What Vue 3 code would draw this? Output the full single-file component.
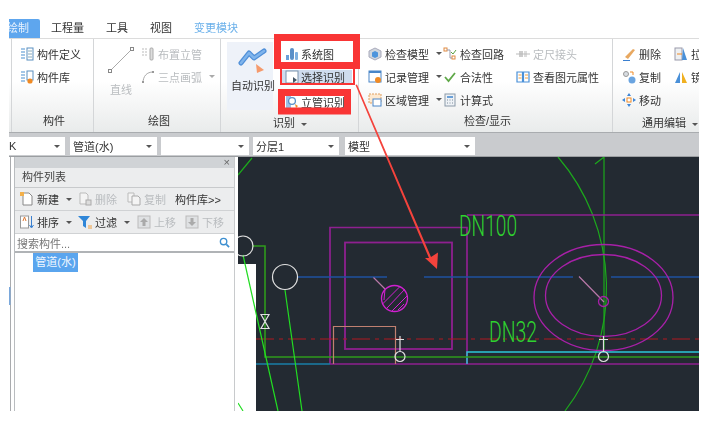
<template>
  <div class="page">
    <div class="app">
      <!-- tab strip -->
      <nav class="tabs">
        <span class="tab active">绘制</span>
        <span class="tab t1">工程量</span>
        <span class="tab t2">工具</span>
        <span class="tab t3">视图</span>
        <span class="tab t4">变更模块</span>
      </nav>

      <!-- ribbon -->
      <section class="ribbon">
        <div class="group g1">
          <div class="body">
            <div class="col">
              <div class="row">
                <svg class="ic" viewBox="0 0 14 14"><path d="M1 2h4M1 5h4M1 8h4M1 11h4" stroke="#4a90d0" stroke-width="1.2" fill="none"/><rect x="7" y="1" width="6" height="12" fill="#fff" stroke="#5a8fc0"/><path d="M8 4h4M8 7h4M8 10h4" stroke="#8ab" /></svg>
                <span>构件定义</span>
              </div>
              <div class="row">
                <svg class="ic" viewBox="0 0 14 14"><path d="M1 2h4M1 5h4M1 8h4M1 11h4" stroke="#4a90d0" stroke-width="1.2" fill="none"/><rect x="7" y="1" width="6" height="9" fill="#fff" stroke="#5a8fc0"/><circle cx="10" cy="11" r="2.6" fill="#f08a24"/></svg>
                <span>构件库</span>
              </div>
            </div>
          </div>
          <div class="label">构件</div>
        </div>

        <div class="group g2">
          <div class="body">
            <div class="big line-btn">
              <svg class="big-ic" viewBox="0 0 26 26"><path d="M2 24L24 2" stroke="#aaa" fill="none"/><rect x="0.5" y="22.5" width="3" height="3" fill="#fff" stroke="#888"/><rect x="22.5" y="0.5" width="3" height="3" fill="#fff" stroke="#888"/></svg>
              <span class="dim">直线</span>
            </div>
            <div class="col">
              <div class="row dim">
                <svg class="ic" viewBox="0 0 14 14"><path d="M1 2h6M1 5h6M1 8h6" stroke="#bbb" stroke-dasharray="2 1"/><rect x="9" y="1" width="3" height="12" rx="1" fill="#ddd" stroke="#aaa"/></svg>
                <span>布置立管</span>
              </div>
              <div class="row dim">
                <svg class="ic" viewBox="0 0 14 14"><path d="M2 13C2 6 6 2 12 2" stroke="#aaa" fill="none"/><rect x="1" y="11" width="2" height="2" fill="#999"/><rect x="11" y="1" width="2" height="2" fill="#999"/></svg>
                <span>三点画弧</span><i class="caret light"></i>
              </div>
            </div>
          </div>
          <div class="label">绘图</div>
        </div>

        <div class="group g3">
          <div class="body">
            <div class="big auto-btn">
              <svg class="auto-ic" viewBox="0 0 30 28"><path d="M3 17L11 7L16 12L26 5" stroke="#4f8fd8" stroke-width="5" fill="none" stroke-linecap="round" stroke-linejoin="round"/><path d="M3 17L11 7L16 12L26 5" stroke="#7fb4ec" stroke-width="2.500" fill="none" stroke-linecap="round" stroke-linejoin="round"/><path d="M18 18L26 24L19 27Z" fill="#f59a6c"/></svg>
              <span>自动识别</span>
            </div>
            <div class="col small-col">
              <div class="row plain sys">
                <svg class="ic" viewBox="0 0 14 14"><rect x="1" y="8" width="3" height="5" fill="#6a9fd8"/><rect x="5" y="1" width="4" height="12" rx="2" fill="#5a8fc8"/><rect x="10" y="5" width="3" height="8" rx="1" fill="#7fb0e0"/></svg>
                <span>系统图</span>
              </div>
              <div class="row sel">
                <svg class="ic" viewBox="0 0 14 14"><rect x="1" y="1" width="12" height="12" fill="#fff" stroke="#7a93ad"/><path d="M8 7l4 3-4 3Z" fill="#456"/></svg>
                <span>选择识别</span>
              </div>
              <div class="row plain riser">
                <svg class="ic" viewBox="0 0 14 14"><path d="M1 1h5v12H1Z" fill="#9cc0e6"/><circle cx="7" cy="6" r="3.4" fill="#fff" stroke="#5a8fc8" stroke-width="1.3"/><path d="M10 9l3 2-2 2Z" fill="#f08a24"/></svg>
                <span>立管识别</span>
              </div>
            </div>
          </div>
          <div class="label with-caret">识别<i class="caret"></i></div>
        </div>

        <div class="group g4">
          <div class="body">
            <div class="col c41">
              <div class="row">
                <svg class="ic" viewBox="0 0 14 14"><path d="M7 1l6 3v6l-6 3-6-3V4Z" fill="#cfd6de" stroke="#aab"/><path d="M7 4l3 1.500v4L7 11 4 9.500v-4Z" fill="#4d94dc"/></svg>
                <span>检查模型</span><i class="caret"></i>
              </div>
              <div class="row">
                <svg class="ic" viewBox="0 0 14 14"><rect x="1" y="1" width="12" height="11" fill="#fff" stroke="#4a86c8"/><path d="M1 1h12v2H1Z" fill="#4a86c8"/><circle cx="10" cy="10" r="3" fill="#f08a24"/></svg>
                <span>记录管理</span><i class="caret"></i>
              </div>
              <div class="row">
                <svg class="ic" viewBox="0 0 14 14"><rect x="1" y="1" width="12" height="9" fill="#fde9d0" stroke="#e0a060" stroke-dasharray="2 1"/><rect x="5" y="6" width="8" height="7" fill="#fff" stroke="#4a86c8"/></svg>
                <span>区域管理</span><i class="caret"></i>
              </div>
            </div>
            <div class="col c42">
              <div class="row">
                <svg class="ic" viewBox="0 0 14 14"><rect x="1" y="1" width="3" height="3" fill="#fff" stroke="#e08a40"/><rect x="9" y="9" width="3" height="3" fill="#fff" stroke="#e08a40"/><path d="M4 3h3v8h2" stroke="#99a" fill="none"/><path d="M8 5l2 2 3-4" stroke="#5aa040" fill="none"/></svg>
                <span>检查回路</span>
              </div>
              <div class="row">
                <svg class="ic" viewBox="0 0 14 14"><path d="M2 7l3.500 4L12 3" stroke="#5fa848" stroke-width="1.800" fill="none"/></svg>
                <span>合法性</span>
              </div>
              <div class="row">
                <svg class="ic" viewBox="0 0 14 14"><rect x="2" y="1" width="10" height="12" fill="#eef2f6" stroke="#8a99a8"/><rect x="4" y="3" width="6" height="2" fill="#6aa0d8"/><path d="M4 7h1M6.500 7h1M9 7h1M4 10h1M6.500 10h1M9 10h1" stroke="#7a8a9a"/></svg>
                <span>计算式</span>
              </div>
            </div>
            <div class="col">
              <div class="row dim">
                <svg class="ic" viewBox="0 0 14 14"><rect x="3" y="4" width="4" height="6" fill="#ccc"/><rect x="8" y="4" width="3" height="6" fill="#ddd"/><path d="M0 7h14" stroke="#bbb"/></svg>
                <span>定尺接头</span>
              </div>
              <div class="row">
                <svg class="ic" viewBox="0 0 14 14"><path d="M1 2h5.500v10H1ZM7.500 2H13v10H7.500Z" fill="#fff" stroke="#4a90d8" stroke-width="1.200"/><path d="M2.500 5h3M2.500 8h3M9 5h3M9 8h3" stroke="#f0a040"/></svg>
                <span>查看图元属性</span>
              </div>
            </div>
          </div>
          <div class="label">检查/显示</div>
        </div>

        <div class="group g5">
          <div class="body">
            <div class="col c51">
              <div class="row">
                <svg class="ic" viewBox="0 0 14 14"><path d="M3 10L11 2l2 1-7 9Z" fill="#e8a860"/><path d="M1 13.500h7" stroke="#3a7fd0"/></svg>
                <span>删除</span>
              </div>
              <div class="row">
                <svg class="ic" viewBox="0 0 14 14"><circle cx="4" cy="4" r="2.500" fill="#d8dde2" stroke="#999"/><circle cx="10" cy="10" r="3.500" fill="#6aa4e0"/><path d="M8 2h3v3" stroke="#f08a24" fill="none"/></svg>
                <span>复制</span>
              </div>
              <div class="row">
                <svg class="ic" viewBox="0 0 14 14"><rect x="5" y="5" width="4" height="4" fill="#fff" stroke="#f08a24"/><path d="M7 0l2 3H5ZM7 14l2-3H5ZM0 7l3-2v4ZM14 7l-3-2v4Z" fill="#3f86d6"/></svg>
                <span>移动</span>
              </div>
            </div>
            <div class="col">
              <div class="row">
                <svg class="ic" viewBox="0 0 14 14"><rect x="1" y="1" width="7" height="12" fill="#eef0f2" stroke="#99a"/><path d="M9 1l4 12H8Z" fill="#4a90d8"/><path d="M3 7h5" stroke="#f08a24"/></svg>
                <span>拉伸</span>
              </div>
              <div class="row">
                <svg class="ic" viewBox="0 0 14 14"><path d="M6 2v11H1Z" fill="#4a90d8"/><path d="M8 2v11h5Z" fill="#f0b020"/></svg>
                <span>镜像</span>
              </div>
            </div>
          </div>
          <div class="label with-caret">通用编辑<i class="caret"></i></div>
        </div>
      </section>

      <!-- selectors -->
      <div class="combos">
        <div class="combo c-a"><span>K</span><i class="caret"></i></div>
        <div class="combo c-b"><span>管道(水)</span><i class="caret"></i></div>
        <div class="combo c-c"><span></span><i class="caret"></i></div>
        <div class="combo c-d"><span>分层1</span><i class="caret"></i></div>
        <div class="combo c-e"><span>模型</span><i class="caret"></i></div>
      </div>

      <div class="main">
        <aside class="side">
          <div class="panel">
            <div class="panel-close">×</div>
            <div class="panel-title">构件列表</div>
            <div class="tool">
              <div class="tb w-new">
                <svg class="ic" viewBox="0 0 14 14"><path d="M3 1h6l3 3v9H3Z" fill="#fff" stroke="#888"/><rect x="0" y="0" width="4" height="4" fill="#f3b04a"/></svg>
                <span>新建</span><i class="caret"></i>
              </div>
              <div class="tb dim w-del">
                <svg class="ic" viewBox="0 0 14 14"><path d="M2 1h6l2 2v9H2Z" fill="#f4f4f4" stroke="#bbb"/><rect x="8" y="8" width="5" height="5" fill="#ddd" stroke="#aaa"/></svg>
                <span>删除</span>
              </div>
              <div class="tb dim w-copy">
                <svg class="ic" viewBox="0 0 14 14"><path d="M1 1h6v9H1Z" fill="#f4f4f4" stroke="#bbb"/><path d="M5 4h6l2 2v7H5Z" fill="#f4f4f4" stroke="#aaa"/></svg>
                <span>复制</span>
              </div>
              <div class="tb lib">构件库&gt;&gt;</div>
            </div>
            <div class="tool">
              <div class="tb w-new">
                <svg class="ic" viewBox="0 0 14 14"><rect x="0.500" y="1" width="8" height="12" fill="#fff" stroke="#999"/><path d="M3 6l1.500-4L6 6" stroke="#e07830" fill="none"/><path d="M11.500 1v11M9.500 10l2 3 2-3" stroke="#3a80d0" fill="none"/></svg>
                <span>排序</span><i class="caret"></i>
              </div>
              <div class="tb w-filter">
                <svg class="ic" viewBox="0 0 14 14"><path d="M0 1h12L8 6v7L5 11V6Z" fill="#2f86d8"/><path d="M10 11h4M10 13h4" stroke="#f0a040"/></svg>
                <span>过滤</span><i class="caret"></i>
              </div>
              <div class="tb dim w-up">
                <svg class="ic" viewBox="0 0 14 14"><rect x="1" y="1" width="12" height="12" fill="#dfe1e3" stroke="#bbb"/><path d="M7 3l4 4H8.500v4h-3V7H3Z" fill="#aaa"/></svg>
                <span>上移</span>
              </div>
              <div class="tb dim">
                <svg class="ic" viewBox="0 0 14 14"><rect x="1" y="1" width="12" height="12" fill="#dfe1e3" stroke="#bbb"/><path d="M7 11l4-4H8.500V3h-3v4H3Z" fill="#aaa"/></svg>
                <span>下移</span>
              </div>
            </div>
            <div class="search">
              <span>搜索构件...</span>
              <svg class="search-ic" viewBox="0 0 12 12"><circle cx="5" cy="5" r="3.500" fill="none" stroke="#3d8fd0" stroke-width="1.500"/><path d="M8 8l3 3" stroke="#3d8fd0" stroke-width="1.800"/></svg>
            </div>
            <div class="list">
              <div class="item">管道(水)</div>
            </div>
          </div>
        </aside>

        <!-- CAD drawing, viewBox is in page pixels -->
        <svg class="canvas" viewBox="238 157 461 254">
          <rect x="238" y="157" width="461" height="254" fill="#232a32"/>
          <rect x="238" y="264" width="18" height="147" fill="#fff"/>

          <path d="M558 157A202 202 0 0 1 565 411" stroke="#1ca81c" stroke-width="1.200" fill="none"/>
          <path d="M252 158L238 175M604 157V352M595 164L604 157" stroke="#1ca81c" stroke-width="1.200" fill="none"/>

          <path d="M467 215H699M330 364V227.500H467V364M330 364H699" stroke="#8e2090" stroke-width="1.700" fill="none"/>
          <rect x="345" y="242.500" width="107" height="106.500" stroke="#8e2090" stroke-width="1.800" fill="none"/>

          <path d="M298 277H387M424 277H573M611 277H699" stroke="#1f52a0" stroke-width="1.600" fill="none"/>
          <path d="M256 339H699" stroke="#b01820" stroke-width="1.200" stroke-dasharray="18 5 4 5"/>
          <path d="M256 364H330" stroke="#1a7fa8" stroke-width="1.700"/>
          <path d="M467 364V352H699" stroke="#2cc8d8" fill="none" stroke-width="1.400"/>
          <path d="M252 246H265V357H699" stroke="#2f9a1c" stroke-width="1.600" fill="none"/>
          <path d="M243 255L278 411M285 290L302 411M238 403L243 411" stroke="#22dd22" stroke-width="1.200" fill="none"/>

          <path d="M333.500 364V326.500H395.500V364" stroke="#c08070" stroke-width="1.200" fill="none"/>
          <path d="M373.500 277.500L385 289M579 276.500L604 302" stroke="#b878a8" stroke-width="1.200" fill="none"/>

          <circle cx="394.500" cy="298.500" r="13" stroke="#d020d0" stroke-width="1.300" fill="none"/>
          <path d="M385 289L384 300M400 286.500L382.500 304M405 289L387 308M407 296L392 311M404 304L398 310" stroke="#d020d0" fill="none"/>

          <ellipse cx="603.500" cy="297.500" rx="69.500" ry="53" stroke="#a820a8" stroke-width="1.300" fill="none"/>
          <ellipse cx="603.500" cy="295.500" rx="58" ry="41" stroke="#a820a8" stroke-width="1.300" fill="none"/>
          <circle cx="603.500" cy="301.500" r="5" stroke="#a820a8" stroke-width="1.300" fill="none"/>

          <g stroke="#e0e0e0" stroke-width="1.200" fill="none">
            <circle cx="243" cy="246" r="10"/>
            <circle cx="285" cy="277" r="12.500"/>
            <path d="M261 314.500H269L261 328.500H269Z"/>
            <circle cx="400" cy="356.500" r="5"/>
            <path d="M400 336V351M396 339.500H404"/>
            <circle cx="603.500" cy="356.500" r="5"/>
            <path d="M603.500 336V351M599 339.500H608"/>
          </g>

          <text class="dn" x="459" y="236" font-size="29" textLength="58" lengthAdjust="spacingAndGlyphs">DN100</text>
          <text class="dn" x="489" y="342" font-size="29" textLength="48" lengthAdjust="spacingAndGlyphs">DN32</text>
        </svg>
      </div>
    </div>

    <!-- red annotations on top of the screenshot -->
    <svg class="marks" viewBox="0 0 703 421">
      <rect x="277.500" y="37.500" width="79" height="28" fill="none" stroke="#f93535" stroke-width="7"/>
      <path d="M281 69V84H354V69" fill="none" stroke="#f93535" stroke-width="2"/>
      <rect x="281.500" y="92.500" width="66" height="18.500" fill="none" stroke="#f93535" stroke-width="7"/>
      <path d="M355.500 85L357 84.500L431 257L438 252.500L437 269L425 258L429 258Z" fill="#f4433c"/>
      <rect x="9" y="287" width="1.500" height="18" fill="#7aa8dc"/>
    </svg>
  </div>
</template>

<script setup>
</script>

<style>
html, body {
  margin: 0;
  background: #fff;
}
</style>

<style scoped>
.page {
  position: relative;
  width: 703px;
  height: 421px;
  overflow: hidden;
  background: #fff;
  font-family: "Liberation Sans", "Noto Sans CJK SC", sans-serif;
  font-size: 11px;
  color: #333;
}
.app {
  width: 690px;
  height: 392px;
  margin-left: 9px;
  padding-top: 19px;
  overflow: hidden;
  filter: blur(0.3px);
}
.tabs {
  display: flex;
  height: 19px;
  align-items: center;
}
.tab {
  line-height: 19px;
}
.tab.active {
  width: 31px;
  height: 19px;
  background: #5ea6ee;
  color: #e8f2fd;
  border-radius: 0 2px 0 0;
  overflow: hidden;
  text-indent: -2px;
}
.t1 { margin-left: 11px; }
.t2 { margin-left: 22px; }
.t3 { margin-left: 22px; }
.t4 { margin-left: 22px; color: #6ab0ea; }

.ribbon {
  display: flex;
  height: 95px;
  box-sizing: border-box;
  padding-left: 3px;
  overflow: hidden;
  background: linear-gradient(#fff 45%, #e9ebeb);
  border-top: 1px solid #dcdcdc;
  border-bottom: 1px solid #a9acaf;
}
.group {
  display: flex;
  flex-direction: column;
  flex: none;
  box-sizing: border-box;
  border-right: 1px solid #d4d6d8;
  margin-right: 1px;
}
.g1 { width: 83px; border-left: 1px solid #d4d6d8; margin-left: -1px; }
.g2 { width: 126px; }
.g3 { width: 137px; }
.g4 { width: 253px; }
.g5 { width: 90px; border-right: 0; }
.body {
  display: flex;
  height: 73px;
  box-sizing: border-box;
  padding: 3px 0 0 8px;
}
.label {
  padding-left: 3px;
  text-align: center;
  line-height: 18px;
}
.with-caret {
  padding: 2px 0 0;
}
.with-caret .caret {
  margin-left: 6px;
}
.g5 .label {
  padding-left: 28px;
  text-align: left;
}
.col {
  display: flex;
  flex: none;
  flex-direction: column;
}
.row {
  display: flex;
  align-items: center;
  height: 23px;
  gap: 3px;
  white-space: nowrap;
}
.ic {
  width: 14px;
  height: 14px;
  flex: none;
}
.dim {
  color: #b9bcbf;
}
.caret {
  display: inline-block;
  width: 0;
  height: 0;
  margin-left: 4px;
  vertical-align: middle;
  border-top: 3px solid #555;
  border-left: 3px solid transparent;
  border-right: 3px solid transparent;
}
.caret.light {
  border-top-color: #aaa;
  margin-left: 4px;
}
.big {
  display: flex;
  flex-direction: column;
  align-items: center;
  flex: none;
}
.line-btn {
  width: 36px;
  margin-left: 1px;
  margin-right: 2px;
}
.big-ic {
  width: 26px;
  height: 26px;
  margin: 5px 0 8px;
}
.g2 .body {
  padding-left: 7px;
}
.g3 .body {
  padding-left: 5px;
}
.auto-btn {
  width: 46px;
  height: 68px;
  background: #eef2f9;
}
.auto-btn span {
  white-space: nowrap;
  margin-top: 3px;
  margin-left: 6px;
}
.auto-ic {
  width: 30px;
  height: 28px;
  margin-top: 4px;
  margin-left: 6px;
}
.small-col {
  margin-left: 9px;
}
.small-col .row {
  gap: 2px;
}
.plain {
  background: #fff;
  width: 70px;
  padding-left: 3px;
  box-sizing: border-box;
}
.sys {
  height: 21px;
  margin-top: 1px;
}
.sel {
  height: 14px;
  width: 70px;
  margin-top: 6px;
  padding-left: 3px;
  box-sizing: border-box;
  background: #cfdcee;
}
.riser {
  height: 13px;
  width: 59px;
  margin: 11px 0 0 2px;
  padding-left: 1px;
}
.c41 { width: 75px; }
.c42 { width: 73px; }
.c51 { width: 52px; }

.combos {
  display: flex;
  height: 24px;
  box-sizing: border-box;
  padding-top: 4px;
  background: #c9cbce;
  border-bottom: 1px solid #9b9ea1;
}
.combo {
  display: flex;
  align-items: center;
  justify-content: space-between;
  box-sizing: border-box;
  height: 18px;
  padding: 0 5px 0 3px;
  background: #fff;
  flex: none;
}
.c-a { width: 56px; margin-right: 5px; padding-left: 0; }
.c-b { width: 87px; margin-right: 4px; }
.c-c { width: 88px; margin-right: 4px; }
.c-d { width: 86px; margin-right: 6px; }
.c-e { width: 130px; }

.main {
  display: flex;
  height: 254px;
}
.side {
  width: 229px;
  flex: none;
  box-sizing: border-box;
  padding-left: 5px;
  background: linear-gradient(90deg, #fff 1px, #a9abae 1px, #a9abae 2px, #fff 2px);
}
.panel {
  display: flex;
  flex-direction: column;
  width: 221px;
  height: 254px;
  box-sizing: border-box;
  border-left: 1.5px solid #b9bcbf;
  border-right: 1.5px solid #c8cacc;
  background: #ecedee;
}
.panel-close {
  height: 11px;
  line-height: 11px;
  padding-right: 4px;
  text-align: right;
  background: #d0d3d6;
  color: #666;
  font-size: 11px;
}
.panel-title {
  height: 19px;
  line-height: 19px;
  padding-left: 7px;
  border-bottom: 1px solid #c8cacc;
  color: #444;
}
.tool {
  display: flex;
  align-items: center;
  height: 22px;
  padding-left: 5px;
  border-bottom: 1px solid #d0d2d4;
}
.tb {
  display: flex;
  align-items: center;
  gap: 3px;
  flex: none;
  white-space: nowrap;
}
.w-new { width: 58px; }
.w-del { width: 49px; }
.w-copy { width: 48px; }
.w-filter { width: 59px; }
.w-up { width: 48px; }
.lib { color: #333; }
.search {
  display: flex;
  align-items: center;
  justify-content: space-between;
  height: 17px;
  padding: 0 4px 0 2px;
  background: #fff;
  border-bottom: 2px solid #b0b3b6;
  color: #777;
}
.search-ic {
  width: 11px;
  height: 11px;
}
.list {
  flex: 1;
  background: #fff;
}
.item {
  width: 45px;
  height: 19px;
  line-height: 19px;
  margin-left: 18px;
  text-align: center;
  background: #5aa5ee;
  color: #f2f8ff;
}
.canvas {
  width: 461px;
  height: 254px;
  flex: none;
  display: block;
}
.dn {
  font-family: Roboto, "Liberation Sans", sans-serif;
  fill: #2fd22f;
  font-weight: 300;
}
.marks {
  position: absolute;
  left: 0;
  top: 0;
  width: 703px;
  height: 421px;
  pointer-events: none;
}
</style>
